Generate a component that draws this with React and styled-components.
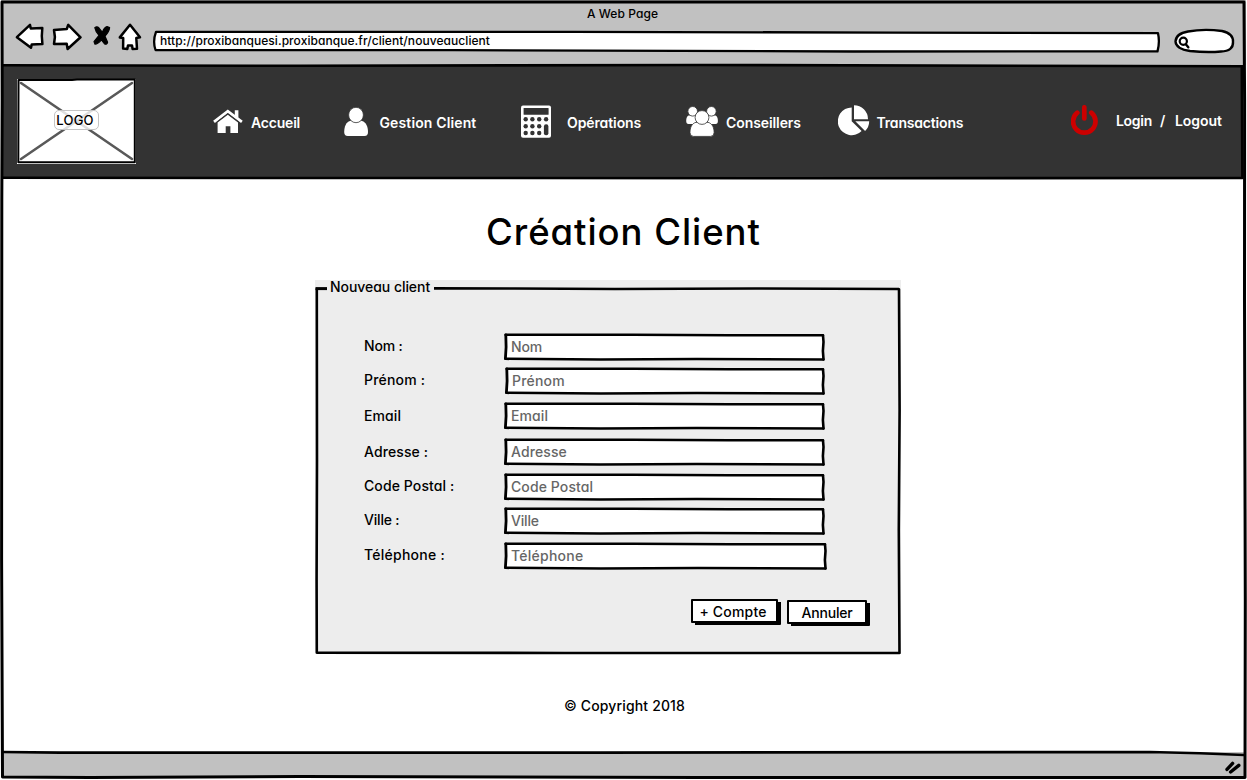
import React from 'react';
import styled, { createGlobalStyle } from 'styled-components';

const GlobalStyle = createGlobalStyle`
  *, *::before, *::after { box-sizing: border-box; }
  body {
    margin: 0;
    background: #fff;
    color: #000;
    font-family: Inter, "Liberation Sans", sans-serif;
    font-feature-settings: "cv11", "ss03";
    font-size: 14px;
    font-weight: 500;
    line-height: 20px;
  }
`;

const Window = styled.div`
  position: relative;
  display: flex;
  flex-direction: column;
  width: 1247px;
  height: 780px;
  overflow: hidden;
`;

const Sketch = styled.svg`
  position: absolute;
  inset: 0;
  width: 100%;
  height: 100%;
  overflow: visible;
  pointer-events: none;
  fill: none;
  stroke: #000;
  stroke-width: 2.6;
  stroke-linecap: round;
  stroke-linejoin: round;
`;

const Text = styled.span`
  letter-spacing: ${(p) => p.$ls || 0}px;
  white-space: pre;
`;

/* Browser chrome */

const Chrome = styled.header`
  height: 65px;
  margin: 0 1px;
  background: #c1c1c1;
`;

const WindowTitle = styled.div`
  padding: 6px 2px 0 0;
  font-size: 12px;
  line-height: 16px;
  text-align: center;
`;

const Toolbar = styled.div`
  display: flex;
  align-items: flex-start;
  padding-left: 14px;
`;

const ToolIcon = styled.svg`
  flex: none;
  width: ${(p) => p.$w}px;
  height: 30px;
  margin-right: ${(p) => p.$gap}px;
  fill: #fff;
  stroke: #000;
  stroke-width: 2.5;
  stroke-linejoin: round;
  stroke-linecap: round;
`;

const AddressBar = styled.div`
  position: relative;
  width: 1007px;
  height: 22px;
  margin-top: 9px;
  padding-left: 7px;
  font-size: 12px;
  line-height: 19px;
`;

const SearchPill = styled.svg`
  width: 63px;
  height: 30px;
  margin: 4px 0 0 13px;
  fill: #fff;
  stroke: #000;
  stroke-width: 2.4;
  stroke-linecap: round;
`;

/* Navigation */

const NavBar = styled.nav`
  display: flex;
  align-items: center;
  height: 113px;
  margin: 0 4px 0 3px;
  padding: 0 22px 0 14px;
  background: #333;
  color: #fff;
`;

const Logo = styled.div`
  position: relative;
  display: flex;
  align-items: center;
  justify-content: center;
  width: 119px;
  height: 85px;
  background: #fff;
  color: #000;
`;

const LogoLabel = styled.span`
  position: relative;
  width: 45px;
  height: 20px;
  margin-bottom: 3px;
  padding-right: 3px;
  border: 1px solid #c4c4c4;
  border-radius: 5px;
  background: rgba(255, 255, 255, 0.8);
  font-size: 13px;
  font-weight: 450;
  line-height: 18px;
  text-align: center;
  letter-spacing: 0.2px;
`;

const Links = styled.div`
  display: grid;
  grid-template-columns: 131px 177px 165px 152px 130px;
  margin-left: 77px;
`;

const NavItem = styled.a`
  display: flex;
  align-items: center;
  gap: ${(p) => p.$gap}px;
`;

const NavIcon = styled.svg`
  flex: none;
  width: ${(p) => p.$w}px;
  height: 33px;
  fill: #fff;
`;

const NavLabel = styled(Text)`
  padding-top: 3px;
  font-weight: 600;
`;

const Account = styled.div`
  display: flex;
  align-items: center;
  margin-left: auto;
  font-weight: 600;
`;

const AccountText = styled(Text)`
  width: ${(p) => p.$w}px;
  margin-left: ${(p) => p.$ml || 0}px;
  padding-bottom: 2px;
`;

/* Page */

const Main = styled.main`
  flex: 1;
`;

const Heading = styled.h1`
  margin: 30px 0 24px;
  font-size: 36.5px;
  font-weight: 450;
  line-height: 48px;
  text-align: center;
  letter-spacing: 0.95px;
`;

const Panel = styled.section`
  position: relative;
  width: 586px;
  height: 374px;
  margin-left: 315px;
  background: #ededed;
`;

const Legend = styled.div`
  height: 14px;
  padding-left: 15px;
  line-height: 14px;
`;

const Form = styled.form`
  padding: 39px 0 0 49px;
`;

const Row = styled.div`
  display: flex;
  margin-bottom: ${(p) => p.$gap}px;
`;

const Label = styled.label`
  width: ${(p) => p.$w || 140}px;
  line-height: ${(p) => p.$lh || 26}px;
`;

const Field = styled.div`
  position: relative;
  width: ${(p) => p.$w}px;
  height: 28px;
  padding-left: 7px;
  color: #666;
  line-height: 28px;
`;

const FieldText = styled(Text)`
  position: relative;
`;

const Actions = styled.div`
  display: flex;
  gap: 9px;
  margin-top: 29px;
  padding-left: 327px;
`;

const Button = styled.button`
  position: relative;
  width: ${(p) => p.$w}px;
  height: 24px;
  margin: ${(p) => p.$drop || 0}px 0 0;
  padding: 1px ${(p) => p.$pr || 0}px 0 0;
  border: 2px solid #000;
  border-radius: 1px;
  background: #fff;
  box-shadow: 2px 1px 0 #000, 3px 2px 0 #000;
  color: #000;
  font: inherit;
  font-feature-settings: inherit;
  line-height: 20px;
  clip-path: polygon(0 0, 100% 0, 100% 3px, calc(100% + 4px) 3px, calc(100% + 4px) calc(100% + 3px), 4px calc(100% + 3px), 4px 100%, 0 100%);
`;

const Copyright = styled.footer`
  margin-top: 42px;
  padding-left: 2px;
  text-align: center;
`;

const StatusBar = styled.div`
  height: 25px;
  margin: 0 2px 3px;
  background: #c1c1c1;
`;

const fields = [
  { label: 'Nom :', hint: 'Nom', gap: 6, ls: -0.15 },
  { label: 'Prénom :', hint: 'Prénom', gap: 7, ls: 0.19, labelWidth: 141, width: 320 },
  { label: 'Email', hint: 'Email', gap: 8, ls: 0.1, lineHeight: 28 },
  { label: 'Adresse :', hint: 'Adresse', gap: 7, ls: 0.11, lineHeight: 28 },
  { label: 'Code Postal :', hint: 'Code Postal', gap: 6, ls: 0.1 },
  { label: 'Ville :', hint: 'Ville', gap: 7, ls: -0.2 },
  { label: 'Téléphone :', hint: 'Téléphone', gap: 0, ls: 0.25, width: 323 },
];

function FieldFrame({ w }) {
  return (
    <Sketch>
      <path fill="#fff" stroke="none" d={`M1 2H${w - 1}V26H1z`} />
      <path d="M1.8 2L2.1 14L1.4 25.6" strokeWidth="2.8" />
      <path d={`M1.6 1.8L${w * 0.4} 1.7L${w * 0.7} 2.3L${w - 2} 2.3`} />
      <path d={`M${w - 2} 2.5L${w - 1.5} 9L${w - 2.1} 18L${w - 1.5} 26.4`} />
      <path d={`M1.4 25.8L${w * 0.3} 26.5L${w * 0.6} 26L${w - 1.6} 26.5`} />
    </Sketch>
  );
}

export default function App() {
  return (
    <>
      <GlobalStyle />
      <Window>
        <Chrome>
          <WindowTitle><Text $ls={0.07}>A Web Page</Text></WindowTitle>
          <Toolbar>
            <ToolIcon $w={30} $gap={7} viewBox="15 22 30 30">
              <path d="M16.9 37.2L30 24.9L30.8 28.6L42.3 28L41.8 36L42.4 44L31.7 44.4L31 47.8z" />
            </ToolIcon>
            <ToolIcon $w={30} $gap={10} viewBox="52 22 30 30">
              <path d="M80.5 37.3L68.2 24.9L66.8 29L54 30L54.9 37L54 44L66.7 43.8L67.6 49z" />
            </ToolIcon>
            <ToolIcon $w={20} $gap={6} viewBox="92 22 20 30">
              <path strokeWidth="1.2" fill="#000" d="M94.8 27.6Q97 25.8 99 28L102.4 32.4Q104 27.5 107 26.6L109.6 27.6Q109.4 31 105 36.2L107.6 42.2Q107 45 104.6 44L101.4 39.8Q98 44 95 44.2L94 41.6L99 35.4Q95.5 31.5 94.8 27.6z" />
            </ToolIcon>
            <ToolIcon $w={24} $gap={11} viewBox="118 22 24 30">
              <path d="M130 24.7L140 37.3L136.3 38L137 48.8L132.6 49L132 45.4H128L127.3 49L123.1 48.6L123.2 38L119.8 37.4z" />
            </ToolIcon>
            <AddressBar>
              <Sketch>
                <path strokeWidth="2.3" d="M3 .8L420 .8L740 1.6L1005 2.2Q1007 11 1004.5 20.4L700 20.5L300 19.2L2.5 19Q-.5 10 3 .8z" fill="#fff" />
              </Sketch>
              <FieldText $ls={0.06}>http://proxibanquesi.proxibanque.fr/client/nouveauclient</FieldText>
            </AddressBar>
            <SearchPill viewBox="1173 26 63 30">
              <path d="M1188 31.5Q1204 28.5 1222 31Q1233.5 33.5 1233 42Q1233.5 51 1221 51.5Q1207 52.8 1190 51Q1176 49 1175.5 41.5Q1176 33.5 1188 31.5z" />
              <circle cx="1183.3" cy="41.3" r="3.6" strokeWidth="2.2" />
              <path d="M1186 44.5L1188.3 47.3" />
            </SearchPill>
          </Toolbar>
        </Chrome>

        <NavBar>
          <Logo>
            <Sketch>
              <path stroke="#595959" d="M4 4L115 80M4 80L115 4" />
              <path strokeWidth="2" d="M1.5 1L55 1L60 .6H117.8V83.2H1.3z" />
            </Sketch>
            <LogoLabel>LOGO</LogoLabel>
          </Logo>
          <Links>
            <NavItem $gap={8}>
              <NavIcon $w={30} viewBox="213 105 30 33">
                <path d="M234.8 110.2h3.6v7.5h-3.6zM217.6 122.6L227.8 114.8L238 122.6V132.9H230.4V126.3H225.7V132.9H217.6z" />
                <path fill="none" stroke="#fff" strokeWidth="2.8" d="M214 121.8L227.8 111.2L241.9 121.8" />
                <path fill="none" stroke="#333" strokeWidth=".7" d="M216.6 122.2L227.8 113.8L239 122.2" />
              </NavIcon>
              <NavLabel $ls={-0.2}>Accueil</NavLabel>
            </NavItem>
            <NavItem $gap={11.5}>
              <NavIcon $w={24} viewBox="344 105 24 33">
                <path d="M350 121H362C366 122 368 127 368 132Q368 136 364.5 136H347.7Q344.2 136 344.2 132C344.2 127 346 122 350 121z" />
                <ellipse cx="356" cy="115" rx="7.4" ry="7.7" stroke="#333" strokeWidth=".8" />
              </NavIcon>
              <NavLabel $ls={0.13}>Gestion Client</NavLabel>
            </NavItem>
            <NavItem $gap={15}>
              <NavIcon $w={31} viewBox="521 105 31 33">
                <rect x="521" y="105.4" width="30" height="32.3" rx="2" />
                <g fill="#333">
                  <rect x="523.6" y="108" width="25" height="6.8" rx=".6" />
                  {[119.3, 126.2, 133].map((y) =>
                    [525.7, 532.4, 539.2].map((x) => <circle key={`${x}-${y}`} cx={x} cy={y} r="2.2" />)
                  )}
                  <circle cx="546.1" cy="119.3" r="2.2" />
                  <rect x="543.9" y="124.3" width="4.5" height="11" rx="2.1" />
                </g>
              </NavIcon>
              <NavLabel $ls={-0.1}>Opérations</NavLabel>
            </NavItem>
            <NavItem $gap={8}>
              <NavIcon $w={32} viewBox="686 105 32 33">
                <path d="M688.5 115.5H696V124H688.5Q686.2 124 686.2 121Q686.2 116.5 688.5 115.5zM715.6 115.5H708V124H715.6Q717.9 124 717.9 121Q717.9 116.5 715.6 115.5z" />
                <g stroke="#333" strokeWidth=".8">
                  <circle cx="692.7" cy="111.3" r="4.8" />
                  <circle cx="711.4" cy="111.3" r="4.8" />
                  <path d="M696 122.3H708C712.5 123.5 714.1 128 714.1 132.5Q714.1 136.4 710.5 136.4H693.5Q690 136.4 690 132.5C690 128 691.5 123.5 696 122.3z" />
                  <circle cx="702" cy="117.5" r="6.9" />
                </g>
              </NavIcon>
              <NavLabel $ls={-0.09}>Conseillers</NavLabel>
            </NavItem>
            <NavItem $gap={6.5}>
              <NavIcon $w={32} viewBox="838 105 32 33">
                <path d="M851.7 107.4V121.3L861.6 131.1A13.9 13.9 0 1 1 851.7 107.4z" />
                <path d="M854 105.2A14 14 0 0 1 868 119.2H854zM855.3 121.3H869.2A14 14 0 0 1 865.1 131.1z" />
              </NavIcon>
              <NavLabel $ls={-0.18}>Transactions</NavLabel>
            </NavItem>
          </Links>
          <Account>
            <NavIcon $w={28} viewBox="1071 105.3 28 33">
              <path fill="none" stroke="#cc0000" strokeWidth="4.7" strokeLinecap="round" d="M1077.3 113A11.2 11.2 0 1 0 1091.3 113M1084.3 107.6V118.7" />
            </NavIcon>
            <AccountText $w={44} $ml={17} $ls={-0.3}>Login</AccountText>
            <AccountText $w={15}>/</AccountText>
            <AccountText $w={46} $ls={-0.05}>Logout</AccountText>
          </Account>
        </NavBar>

        <Main>
          <Heading>Création Client</Heading>
          <Panel>
            <Sketch>
              <path strokeLinecap="butt" strokeWidth="3" d="M.5 8.6H12" />
              <path strokeLinecap="butt" d="M119 8.4L200 8.5L300 9L440 8.5L584 9" />
              <path d="M1.8 9L2 180L1.6 300L1.8 372.6L250 373L584.5 373L583.8 250L584.6 130L584 9.2" />
            </Sketch>
            <Legend><Text $ls={-0.05}>Nouveau client</Text></Legend>
            <Form>
              {fields.map((f) => (
                <Row key={f.hint} $gap={f.gap}>
                  <Label $w={f.labelWidth} $lh={f.lineHeight}><Text $ls={f.ls}>{f.label}</Text></Label>
                  <Field $w={f.width || 321}>
                    <FieldFrame w={f.width || 321} />
                    <FieldText $ls={f.ls}>{f.hint}</FieldText>
                  </Field>
                </Row>
              ))}
              <Actions>
                <Button type="button" $w={87} $pr={3}><Text $ls={0.18}>+ Compte</Text></Button>
                <Button type="button" $w={80} $drop={1}><Text $ls={-0.2}>Annuler</Text></Button>
              </Actions>
            </Form>
          </Panel>
          <Copyright><Text $ls={0.15}>© Copyright 2018</Text></Copyright>
        </Main>

        <StatusBar />

        <Sketch>
          <path strokeWidth="3" d="M2 2L1244 2L1244.6 100L1244.5 300L1245.3 600L1245 777.6L700 777.4L300 776.6L90 777.6L2.5 777L1.6 560L1.8 200L2.2 100z" />
          <path d="M2.5 65.3L300 65.8L700 65L1243 66.2" />
          <path d="M3 177.8L400 178L800 178.2L1242.4 178L1241.8 67" />
          <path d="M3 752L60 752.6L600 752.6L1150 752L1200 753.3L1244 755" />
          <path strokeWidth="3.4" d="M1227 769.4L1232.6 763.4M1230.6 772L1238.8 765.4" />
        </Sketch>
      </Window>
    </>
  );
}
